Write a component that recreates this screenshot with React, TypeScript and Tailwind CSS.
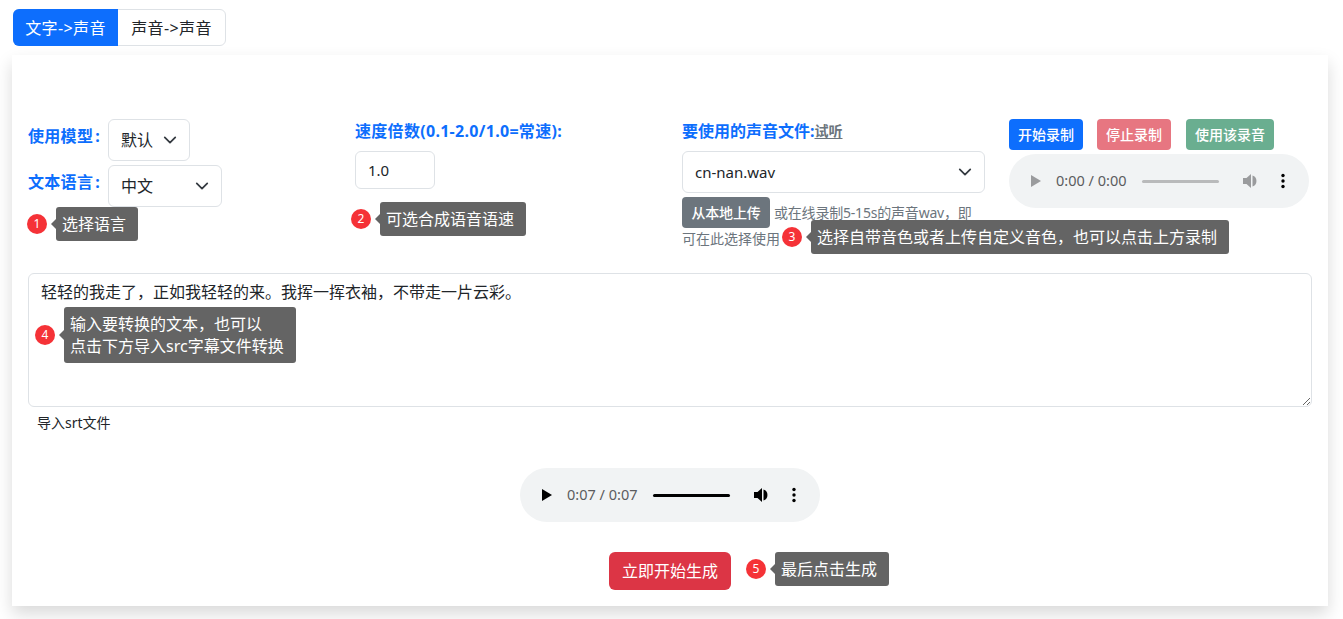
const chevron = (
  <svg viewBox="0 0 16 16" className="pointer-events-none absolute top-1/2 right-[13px] h-3.5 w-3.5 -translate-y-1/2" fill="none" stroke="#343a40" strokeWidth="2" strokeLinecap="round" strokeLinejoin="round">
    <path d="m2 5 6 6 6-6" />
  </svg>
);

function Select({ value, width, size = "text-base" }: { value: string; width: string; size?: string }) {
  return (
    <div className={`relative h-[42px] ${width}`}>
      <select
        defaultValue={value}
        className={`h-full w-full appearance-none rounded-md border border-[#dee2e6] bg-white pl-3 text-[#212529] ${size}`}
      >
        <option>{value}</option>
      </select>
      {chevron}
    </div>
  );
}

function Hint({ n, children }: { n: number; children: React.ReactNode }) {
  return (
    <div className="flex items-center whitespace-nowrap">
      <span className="flex h-5 w-5 shrink-0 items-center justify-center rounded-full bg-[#f53237] text-xs leading-none text-white">{n}</span>
      <div className="relative ml-[9px] rounded-[3px] bg-[#646464] py-1.5 pr-3 pl-1.5 text-base leading-[22px] text-white">
        <span className="absolute top-1/2 -left-[5px] h-0 w-0 -translate-y-1/2 border-y-[5px] border-r-[5px] border-y-transparent border-r-[#646464]" />
        {children}
      </div>
    </div>
  );
}

function AudioBar({ time, active, className }: { time: string; active: boolean; className: string }) {
  const fill = active ? "#000000" : "#9a9b9d";
  return (
    <div className={`flex h-[54px] w-[300px] items-center rounded-[27px] bg-[#f1f3f4] pl-[21px] text-[#5b5c5e] ${className}`}>
      <svg viewBox="0 0 12 14" className="h-[14px] w-[12px]" fill={fill}>
        <path d="M1 1v12l10-6z" />
      </svg>
      <span className="ml-[14px] w-[70px] whitespace-nowrap text-[14.5px]">{time}</span>
      <div className={`ml-4 h-[3px] w-[77px] rounded-full ${active ? "bg-black" : "bg-[#b9babb]"}`} />
      <svg viewBox="0 0 16 16" className="ml-6 h-4 w-4" fill={fill}>
        <path d="M0 5v6h3.5L8 15V1L3.5 5H0z" />
        <path d="M9.5 2.5v11a5.8 5.8 0 0 0 0-11z" />
      </svg>
      <svg viewBox="0 0 4 16" className="ml-[22px] h-4 w-1" fill="#000000">
        <circle cx="2" cy="2.5" r="1.7" />
        <circle cx="2" cy="8" r="1.7" />
        <circle cx="2" cy="13.5" r="1.7" />
      </svg>
    </div>
  );
}

const labelCls = "font-bold text-[#0d6efd] text-base leading-6";

export default function App() {
  return (
    <div className="h-[619px] overflow-hidden bg-white font-['Noto_Sans','Noto_Sans_CJK_SC',sans-serif] text-[#212529]">
      <div className="pl-3 pt-[9px]">
        <div className="ml-px flex h-[37px] w-[213px] rounded-md border border-[#dee2e6] text-base">
          <button className="-my-px -ml-px w-[105px] rounded-l-md bg-[#0d6efd] tracking-[0.4px] text-white">文字-&gt;声音</button>
          <button className="flex-1 tracking-[0.4px] text-[#212529]">声音-&gt;声音</button>
        </div>

        <div className="mt-[9px] h-[551px] w-[1316px] bg-white px-4 pt-[64px] shadow-[0_8px_16px_rgba(0,0,0,0.15)]">
          <div className="grid h-[154px] grid-cols-[327px_327px_327px_1fr]">
            <div>
              <div className="flex items-start">
                <span className={`${labelCls} mt-[5px] w-20 whitespace-nowrap tracking-[0.3px]`}>使用模型<span className="ml-0.5">:</span></span>
                <Select value="默认" width="w-[82px]" />
              </div>
              <div className="mt-[4px] flex items-start">
                <span className={`${labelCls} mt-[5px] w-20 whitespace-nowrap tracking-[0.3px]`}>文本语言<span className="ml-0.5">:</span></span>
                <Select value="中文" width="w-[114px]" />
              </div>
              <div className="-ml-px">
                <Hint n={1}>选择语言</Hint>
              </div>
            </div>

            <div>
              <div className={`${labelCls} h-[32px] tracking-[0.3px]`}>速度倍数(0.1-2.0/1.0=常速):</div>
              <input
                defaultValue="1.0"
                className="block h-[38px] w-20 rounded-md border border-[#dee2e6] px-3 text-[15px] text-[#212529]"
              />
              <div className="mt-[13px] -ml-[4px]">
                <Hint n={2}>可选合成语音语速</Hint>
              </div>
            </div>

            <div className="relative">
              <div className="flex h-[32px] items-start">
                <span className={labelCls}>要使用的声音文件:</span>
                <span className="pt-[2px] text-sm font-semibold text-[#6c757d] underline underline-offset-2">试听</span>
              </div>
              <Select value="cn-nan.wav" width="w-[303px]" size="text-[15px]" />
              <div className="mt-[4px] w-[303px] text-sm leading-[22px] tracking-[-0.2px] text-[#6c757d]">
                <button className="mr-1 h-[31px] w-[88px] rounded bg-[#6c757d] text-sm font-medium text-white">从本地上传</button>
                或在线录制5-15s的声音wav，即<br />
                <span className="tracking-normal">可在此选择使用</span>
              </div>
              <div className="absolute top-[101px] left-[100px]">
                <Hint n={3}>选择自带音色或者上传自定义音色，也可以点击上方录制</Hint>
              </div>
            </div>

            <div>
              <div className="flex text-sm font-medium text-white">
                <button className="h-[31px] w-[74px] rounded bg-[#0d6efd]">开始录制</button>
                <button className="ml-[14px] h-[31px] w-[74px] rounded bg-[#e77681]">停止录制</button>
                <button className="ml-[15px] h-[31px] w-[88px] rounded bg-[#6aae90]">使用该录音</button>
              </div>
              <AudioBar time="0:00 / 0:00" active={false} className="mt-[4px]" />
            </div>
          </div>

          <div className="relative">
            <textarea
              defaultValue="轻轻的我走了，正如我轻轻的来。我挥一挥衣袖，不带走一片云彩。"
              className="block h-[134px] w-full rounded-md border border-[#dee2e6] px-3 py-[6px] text-base leading-6 text-[#212529]"
            />
            <div className="absolute top-[34px] left-[7px]">
              <Hint n={4}>
                输入要转换的文本，也可以
                <br />
                点击下方导入src字幕文件转换
              </Hint>
            </div>
          </div>
          <div className="mt-[6px] pl-[9px] text-sm leading-5">导入srt文件</div>

          <div className="flex justify-center pt-[35px]">
            <AudioBar time="0:07 / 0:07" active className="" />
          </div>

          <div className="relative mt-[30px] flex justify-center">
            <button className="h-[38px] w-[122px] rounded-md bg-[#dc3545] text-base text-white">立即开始生成</button>
            <div className="absolute top-0 left-[718px]">
              <Hint n={5}>最后点击生成</Hint>
            </div>
          </div>
        </div>
      </div>
    </div>
  );
}
